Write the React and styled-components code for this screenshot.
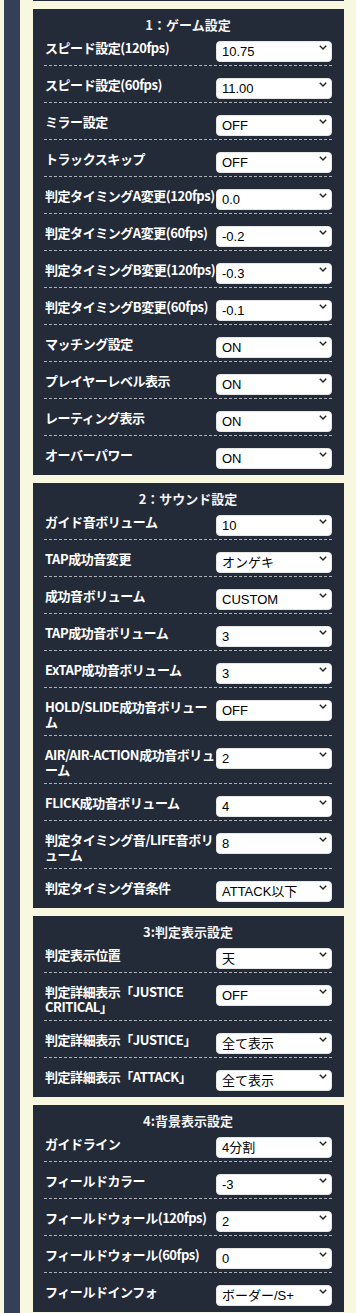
import React from "react";
import styled, { createGlobalStyle } from "styled-components";

const GlobalStyle = createGlobalStyle`
  html, body {
    margin: 0;
    padding: 0;
    background: #f8f7df;
  }
  body {
    font-family: "Noto Sans CJK JP", "Noto Sans", sans-serif;
  }
`;

const sections = [
  {
    title: "1：ゲーム設定",
    rows: [
      ["スピード設定(120fps)", "10.75"],
      ["スピード設定(60fps)", "11.00"],
      ["ミラー設定", "OFF"],
      ["トラックスキップ", "OFF"],
      ["判定タイミングA変更(120fps)", "0.0"],
      ["判定タイミングA変更(60fps)", "-0.2"],
      ["判定タイミングB変更(120fps)", "-0.3"],
      ["判定タイミングB変更(60fps)", "-0.1"],
      ["マッチング設定", "ON"],
      ["プレイヤーレベル表示", "ON"],
      ["レーティング表示", "ON"],
      ["オーバーパワー", "ON"],
    ],
  },
  {
    title: "2：サウンド設定",
    rows: [
      ["ガイド音ボリューム", "10"],
      ["TAP成功音変更", "オンゲキ"],
      ["成功音ボリューム", "CUSTOM"],
      ["TAP成功音ボリューム", "3"],
      ["ExTAP成功音ボリューム", "3"],
      ["HOLD/SLIDE成功音ボリューム", "OFF"],
      ["AIR/AIR-ACTION成功音ボリューム", "2"],
      ["FLICK成功音ボリューム", "4"],
      ["判定タイミング音/LIFE音ボリューム", "8"],
      ["判定タイミング音条件", "ATTACK以下"],
    ],
  },
  {
    title: "3:判定表示設定",
    rows: [
      ["判定表示位置", "天"],
      ["判定詳細表示「JUSTICE CRITICAL」", "OFF"],
      ["判定詳細表示「JUSTICE」", "全て表示"],
      ["判定詳細表示「ATTACK」", "全て表示"],
    ],
  },
  {
    title: "4:背景表示設定",
    rows: [
      ["ガイドライン", "4分割"],
      ["フィールドカラー", "-3"],
      ["フィールドウォール(120fps)", "2"],
      ["フィールドウォール(60fps)", "0"],
      ["フィールドインフォ", "ボーダー/S+"],
    ],
  },
];

const Chevron = () => (
  <ChevronIcon width="8" height="5" viewBox="0 0 8 5">
    <path d="M0.8 0.8 L4 4 L7.2 0.8" fill="none" stroke="#222" strokeWidth="1.4" />
  </ChevronIcon>
);

const SettingRow = ({ label, value }) => (
  <Row>
    <Label>{label}</Label>
    <SelectBox>
      <Select defaultValue={value}>
        <option value={value}>{value}</option>
      </Select>
      <Chevron />
    </SelectBox>
  </Row>
);

const App = () => {
  return (
    <>
      <GlobalStyle />
      <Page>
        <Sidebar />
        <Main>
          <PanelTail />
          {sections.map((s) => (
            <Panel key={s.title}>
              <Title>{s.title}</Title>
              {s.rows.map(([label, value]) => (
                <SettingRow key={label} label={label} value={value} />
              ))}
            </Panel>
          ))}
        </Main>
      </Page>
    </>
  );
};

const Page = styled.div`
  display: flex;
  min-height: 1313px;
  background: #f8f7df;
  overflow: hidden;
`;

const Sidebar = styled.div`
  width: 16px;
  margin-left: 4px;
  background: #334056;
  flex-shrink: 0;
`;

const Main = styled.div`
  width: 311px;
  margin-left: 13px;
  display: flex;
  flex-direction: column;
  gap: 8px;
`;

const PanelTail = styled.div`
  height: 1px;
  background: #232a38;
`;

const Panel = styled.section`
  background: #232a38;
  padding: 8px 12px 3px 11px;
  color: #fff;
`;

const Title = styled.h2`
  margin: 0 0 -4px;
  font-size: 13px;
  line-height: 16px;
  font-weight: 700;
  text-align: center;
  color: #f4f4f4;
`;

const Row = styled.div`
  display: flex;
  align-items: flex-start;
  justify-content: space-between;
  padding: 8px 0 7px;
  border-bottom: 1px dashed #aeb2b8;

  &:last-child {
    border-bottom: none;
  }
`;

const Label = styled.div`
  flex: 1;
  min-width: 0;
  padding: 3px 0 0 1px;
  margin-bottom: -1px;
  font-size: 13px;
  line-height: 15px;
  font-weight: 700;
  letter-spacing: -0.45px;
  color: #fff;
  overflow-wrap: anywhere;
`;

const SelectBox = styled.div`
  position: relative;
  width: 116px;
  height: 21px;
  flex-shrink: 0;
`;

const Select = styled.select`
  appearance: none;
  width: 100%;
  height: 100%;
  margin: 0;
  padding: 0 16px 0 5px;
  box-sizing: border-box;
  border: 1px solid #e6e6e6;
  border-radius: 4px;
  background: #fff;
  color: #000;
  font-family: "Liberation Sans", "Noto Sans CJK JP", sans-serif;
  font-size: 13px;
  line-height: 19px;
`;

const ChevronIcon = styled.svg`
  position: absolute;
  right: 5px;
  top: 8px;
  pointer-events: none;
`;

export default App;
